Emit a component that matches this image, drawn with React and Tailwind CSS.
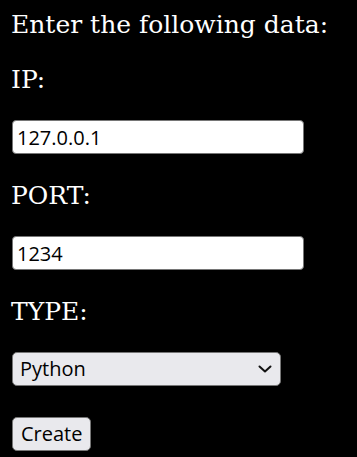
import React from "react";

export default function App() {
  const serif = { fontFamily: '"DejaVu Serif", serif' };
  return (
    <div className="min-h-[457px] w-full bg-black text-white">
      <div className="flex flex-col pl-[11px] pt-[12px]" style={serif}>
        <p className="text-[25px] leading-[26px] text-white">Enter the following data:</p>
        <p className="mt-[29px] text-[25px] leading-[26px] text-white">IP:</p>
        <input
          defaultValue="127.0.0.1"
          className="mt-[27px] ml-[1px] h-[34px] w-[292px] rounded-[4px] border border-[#767676] bg-white px-[4px] font-['Open_Sans',sans-serif] text-[20px] text-black outline-none"
        />
        <p className="mt-[29px] text-[25px] leading-[26px] text-white">PORT:</p>
        <input
          defaultValue="1234"
          className="mt-[27px] ml-[1px] h-[34px] w-[292px] rounded-[4px] border border-[#767676] bg-white px-[4px] font-['Open_Sans',sans-serif] text-[20px] text-black outline-none"
        />
        <p className="mt-[29px] text-[25px] leading-[26px] text-white">TYPE:</p>
        <div className="relative mt-[27px] ml-[1px] w-[269px]">
          <select
            defaultValue="Python"
            className="h-[34px] w-full appearance-none rounded-[5px] border border-[#767676] bg-[#e9e9ed] pl-[7px] font-['Open_Sans',sans-serif] text-[20px] text-black outline-none"
          >
            <option>Python</option>
            <option>Bash</option>
          </select>
          <svg
            className="pointer-events-none absolute right-[9px] top-[13px]"
            width="14"
            height="8"
            viewBox="0 0 14 8"
            fill="none"
          >
            <path d="M1.5 1.5 L7 6.5 L12.5 1.5" stroke="#111" strokeWidth="2" strokeLinecap="round" strokeLinejoin="round" />
          </svg>
        </div>
        <div className="mt-[31px] ml-[1px]">
          <button className="h-[34px] rounded-[5px] border border-[#767676] bg-[#e9e9ed] px-[8px] font-['Open_Sans',sans-serif] text-[20px] text-black">
            Create
          </button>
        </div>
      </div>
    </div>
  );
}
